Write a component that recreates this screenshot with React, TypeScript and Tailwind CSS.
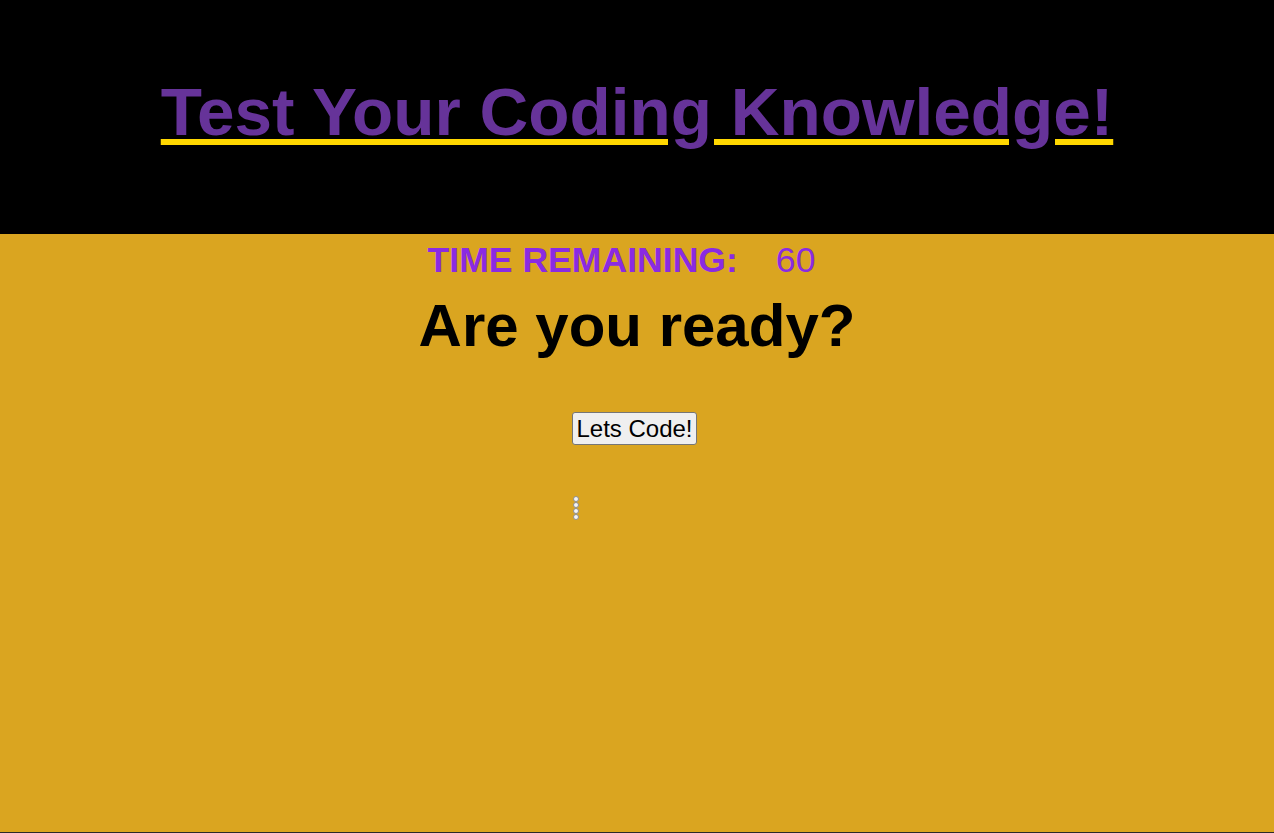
import { useState } from "react";

const choices = ["", "", "", ""];

const App = () => {
  const [started, setStarted] = useState(false);

  return (
    <div
      className="flex h-[833px] flex-col bg-[#daa520]"
      style={{ fontFamily: '"Liberation Sans", Arial, sans-serif' }}
    >
      {/* Header */}
      <header className="h-[234px] shrink-0 bg-black pt-[73px] text-center">
        <h1 className="text-[67.5px] font-bold leading-[normal] text-[#663399] underline decoration-[#ffd700]">
          Test Your Coding Knowledge!
        </h1>
      </header>

      {/* Quiz */}
      <main className="flex flex-1 flex-col items-center">
        <div className="mt-[6px] flex items-baseline pr-[31px] text-[35.6px] leading-[normal] text-[#8a2be2]">
          <span className="font-bold">TIME REMAINING:</span>
          <span className="ml-[38px]">60</span>
        </div>
        <h2 className="mt-[10px] text-[60px] font-bold leading-[normal] text-black">
          {started ? "Question 1" : "Are you ready?"}
        </h2>
        <button
          onClick={() => setStarted(true)}
          className="mt-[52px] mr-[5px] rounded-[3px] border border-[#767676] bg-[#efefef] px-[3px] py-[1.5px] text-[24px] leading-[normal] text-black"
        >
          Lets Code!
        </button>
        <ul className="mt-[51px] mr-[123px] flex flex-col">
          {choices.map((c, i) => (
            <li key={i} className="flex h-[6px] items-center">
              <span className="block h-[6px] w-[6px] rounded-full border border-[#8f8f8f] bg-[#f4f4f4]" />
              {c}
            </li>
          ))}
        </ul>
      </main>
      <div className="h-px shrink-0 bg-[#2a2a2a]" />
    </div>
  );
};

export default App;
